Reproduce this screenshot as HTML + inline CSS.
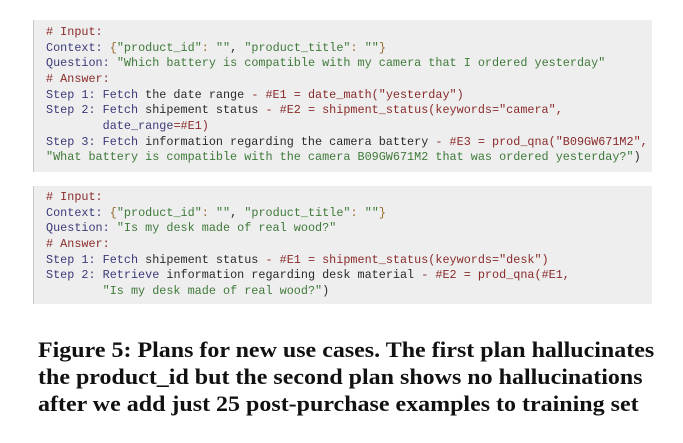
<!DOCTYPE html>
<html><head><meta charset="utf-8"><style>
body{margin:0;width:683px;height:443px;background:#fff;position:relative;overflow:hidden}
.box{position:absolute;left:33px;width:618px;background:#eeeeee;border-left:1px solid #c8c8c8}
pre{margin:0;position:absolute;left:12px;font-family:"Liberation Mono",monospace;font-size:11.8px;line-height:15.65px;color:#2a2a2a}
.c{color:#8a2b2b}.k{color:#3b3b7a}.s{color:#3f7a3a}.o{color:#9a6a2a}.r{color:#8a2b2b}
.cap{position:absolute;left:38px;top:336px;font-family:"Liberation Serif",serif;font-weight:bold;font-size:22px;line-height:27px;color:#111;white-space:nowrap;transform:scaleX(1.09);transform-origin:0 0}
</style></head><body>
<div class="box" style="top:20px;height:152px"><pre style="top:5px"><span class="c"># Input:</span>
<span class="k">Context:</span> <span class="o">{</span><span class="s">"product_id"</span><span class="o">:</span> <span class="s">""</span>, <span class="s">"product_title"</span><span class="o">:</span> <span class="s">""</span><span class="o">}</span>
<span class="k">Question:</span> <span class="s">"Which battery is compatible with my camera that I ordered yesterday"</span>
<span class="c"># Answer:</span>
<span class="k">Step 1: Fetch</span> the date range <span class="r">- #E1 = date_math("yesterday")</span>
<span class="k">Step 2: Fetch</span> shipement status <span class="r">- #E2 = shipment_status(keywords="camera",</span>
        <span class="k">date_range</span><span class="r">=#E1)</span>
<span class="k">Step 3: Fetch</span> information regarding the camera battery <span class="r">- #E3 = prod_qna("B09GW671M2",</span>
<span class="s">"What battery is compatible with the camera B09GW671M2 that was ordered yesterday?"</span>)</pre></div>
<div class="box" style="top:186px;height:118px"><pre style="top:4px"><span class="c"># Input:</span>
<span class="k">Context:</span> <span class="o">{</span><span class="s">"product_id"</span><span class="o">:</span> <span class="s">""</span>, <span class="s">"product_title"</span><span class="o">:</span> <span class="s">""</span><span class="o">}</span>
<span class="k">Question:</span> <span class="s">"Is my desk made of real wood?"</span>
<span class="c"># Answer:</span>
<span class="k">Step 1: Fetch</span> shipement status <span class="r">- #E1 = shipment_status(keywords="desk")</span>
<span class="k">Step 2: Retrieve</span> information regarding desk material <span class="r">- #E2 = prod_qna(#E1,</span>
        <span class="s">"Is my desk made of real wood?"</span>)</pre></div>
<div class="cap">Figure 5: Plans for new use cases. The first plan hallucinates<br>the product_id but the second plan shows no hallucinations<br>after we add just 25 post-purchase examples to training set</div>
</body></html>
